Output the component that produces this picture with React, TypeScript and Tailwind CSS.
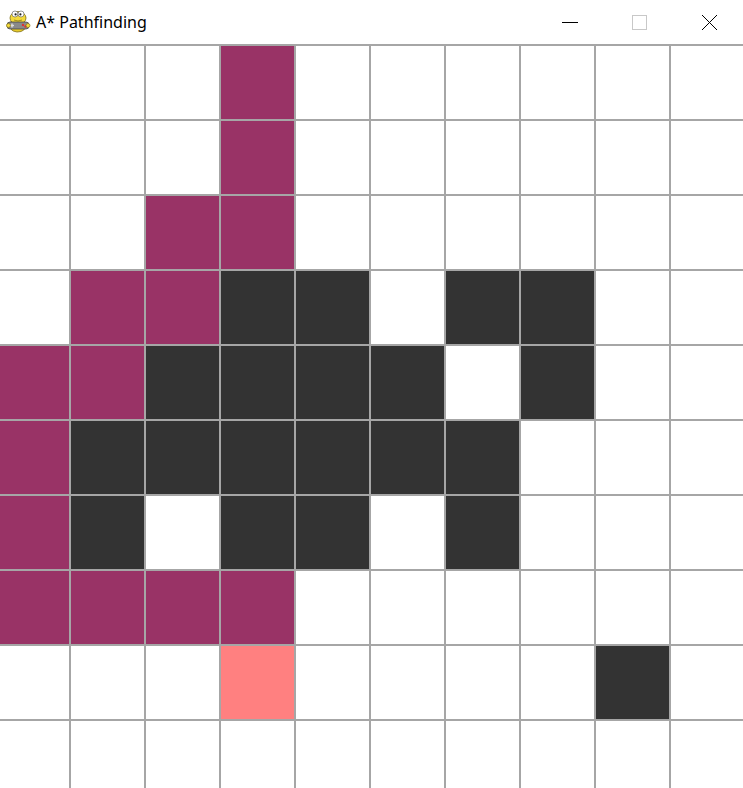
import React from 'react';

// 0 = empty, 1 = path, 2 = wall, 3 = start
const GRID: number[][] = [
  [0, 0, 0, 1, 0, 0, 0, 0, 0, 0],
  [0, 0, 0, 1, 0, 0, 0, 0, 0, 0],
  [0, 0, 1, 1, 0, 0, 0, 0, 0, 0],
  [0, 1, 1, 2, 2, 0, 2, 2, 0, 0],
  [1, 1, 2, 2, 2, 2, 0, 2, 0, 0],
  [1, 2, 2, 2, 2, 2, 2, 0, 0, 0],
  [1, 2, 0, 2, 2, 0, 2, 0, 0, 0],
  [1, 1, 1, 1, 0, 0, 0, 0, 0, 0],
  [0, 0, 0, 3, 0, 0, 0, 0, 2, 0],
  [0, 0, 0, 0, 0, 0, 0, 0, 0, 0],
];

const cellColor = (v: number) => {
  if (v === 1) return 'bg-[#993366]';
  if (v === 2) return 'bg-[#333333]';
  if (v === 3) return 'bg-[#ff8080]';
  return 'bg-white';
};

const PygameIcon = () => (
  <svg width="26" height="23" viewBox="0 0 26 23">
    {/* body */}
    <path d="M5 12 Q3 21 12 22 Q21 22 21 14 Z" fill="#e8cc2c" stroke="#7d6d14" strokeWidth="0.8" />
    {/* head */}
    <ellipse cx="13" cy="8" rx="8" ry="6.5" fill="#f4da3a" stroke="#7d6d14" strokeWidth="0.8" />
    <circle cx="10" cy="4" r="3" fill="#fff" stroke="#555" strokeWidth="0.6" />
    <circle cx="16" cy="4" r="3" fill="#fff" stroke="#555" strokeWidth="0.6" />
    <circle cx="10.6" cy="4.4" r="1.1" fill="#222" />
    <circle cx="15.4" cy="4.4" r="1.1" fill="#222" />
    <path d="M9 10 Q13 12 17 10" stroke="#7d6d14" strokeWidth="0.7" fill="none" />
    {/* controller */}
    <rect x="2" y="12" width="22" height="7" rx="3" fill="#8a8a8a" stroke="#3a3a3a" strokeWidth="0.7" />
    <rect x="5" y="14.8" width="4" height="1.4" fill="#ddd" />
    <rect x="6.3" y="13.5" width="1.4" height="4" fill="#ddd" />
    <circle cx="18" cy="15" r="1.2" fill="#d33" />
    <circle cx="20.5" cy="16.5" r="1.2" fill="#d33" />
    {/* hands */}
    <circle cx="3.5" cy="15.5" r="2" fill="#f4da3a" stroke="#7d6d14" strokeWidth="0.6" />
    <circle cx="23" cy="15.5" r="2" fill="#f4da3a" stroke="#7d6d14" strokeWidth="0.6" />
  </svg>
);

export default function App() {
  return (
    <div className="w-[743px] h-[788px] overflow-hidden bg-white">
      <div className="h-[44px] flex items-center relative">
        <div className="ml-[5px] -mt-[2px]">
          <PygameIcon />
        </div>
        <span className="ml-[5px] text-[16px] text-black" style={{ fontFamily: '"Noto Sans", "Liberation Sans", sans-serif' }}>
          A* Pathfinding
        </span>
        <div className="absolute top-0 right-0 h-full flex items-center">
          <div className="w-[46px] flex justify-center mr-[23px]">
            <div className="w-[16px] h-px bg-black" />
          </div>
          <div className="w-[46px] flex justify-center mr-[24px]">
            <div className="w-[15px] h-[15px] border border-[#c8c8c8]" />
          </div>
          <div className="w-[46px] flex justify-center mr-[11px]">
            <svg width="17" height="17" viewBox="0 0 17 17">
              <path d="M1 1 L16 16 M16 1 L1 16" stroke="#000" strokeWidth="1" />
            </svg>
          </div>
        </div>
      </div>
      <div className="-ml-[6px] grid grid-cols-[repeat(10,75px)]">
        {GRID.flatMap((row, r) =>
          row.map((v, c) => (
            <div
              key={`${r}-${c}`}
              className={`w-[75px] h-[75px] border-l-2 border-t-2 border-[#a6a6a6] ${cellColor(v)}`}
            />
          ))
        )}
      </div>
    </div>
  );
}
